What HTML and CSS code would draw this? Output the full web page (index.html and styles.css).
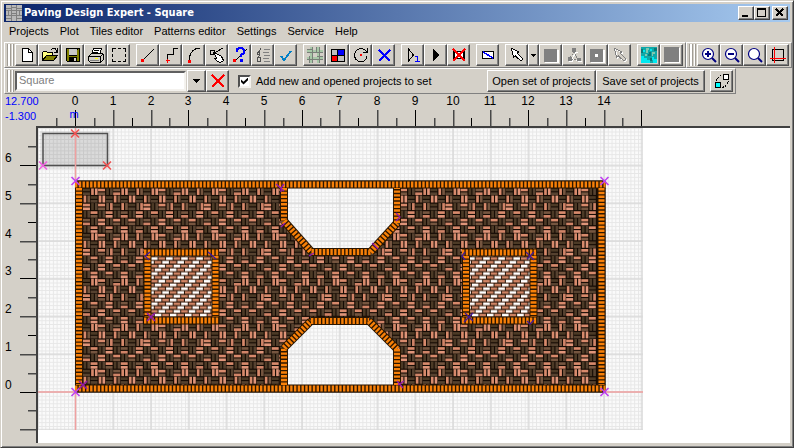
FILE: index.html
```html
<!DOCTYPE html>
<html lang="en">
<head>
<meta charset="utf-8">
<title>Paving Design Expert - Square</title>
<link rel="stylesheet" href="styles.css">
</head>
<body>
<div class="window">
  <header class="titlebar">
    <svg class="logo" viewBox="0 0 16 16"><path fill="#b8b8b8" d="M0 0h16v16H0z"/><path stroke="#808080" fill="none" d="M0 3.500h5M11 3.500h5M5 2.500h6M0 5.500h16M0 10.500h16M5.500 0v16M10.500 0v16M2.500 5v6M13.500 5v6M0 13.500h5M11 13.500h5M5 8.500h6"/></svg>
    <h1>Paving Design Expert - Square</h1>
    <div class="caption-buttons">
      <button class="cap" aria-label="Minimize"><svg viewBox="0 0 12 10"><path d="M2 7h6v2H2z"/></svg></button>
      <button class="cap" aria-label="Maximize"><svg viewBox="0 0 12 10"><path fill-rule="evenodd" d="M1 0h9v9H1zM2 2v6h7V2z"/></svg></button>
      <button class="cap close" aria-label="Close"><svg viewBox="0 0 12 10"><path stroke="#000" stroke-width="1.600" d="M2 1l7 7M9 1L2 8"/></svg></button>
    </div>
  </header>

  <nav class="menu">
    <a href="#">Projects</a><a href="#">Plot</a><a href="#">Tiles editor</a><a href="#">Patterns editor</a><a href="#">Settings</a><a href="#">Service</a><a href="#">Help</a>
  </nav>

  <div class="bands">
    <div class="band grow">
      <span class="grip"></span>
      <div class="group">
        <button class="tool" aria-label="New"><svg viewBox="0 0 16 16"><path fill="#fff" stroke="#000" d="M3.500 1.500h6l4 4v9h-10z"/><path fill="none" stroke="#000" d="M9.500 1.500v4h4"/></svg></button>
        <button class="tool" aria-label="Open"><svg viewBox="0 0 16 16"><path fill="#ffff80" stroke="#000" d="M.500 13.500v-8l1-1h3l1 1h5v3h-6z"/><path fill="#808000" stroke="#000" d="M.500 13.500l4-5h11l-4 5z"/><path fill="none" stroke="#000" d="M9 2.500l2-1h2l2 3M15.500 1v4h-4"/></svg></button>
        <button class="tool" aria-label="Save"><svg viewBox="0 0 16 16"><path fill="#808000" stroke="#000" d="M1.500 1.500h13v13h-12l-1-1z"/><path fill="#c8c8c8" d="M4 2h8v6H4z"/><path d="M4 8h8v1H4zM4 10h8v5H4zM12 2h1v1h-1z"/><path fill="#d4d0c8" d="M9 11h2v3H9z"/></svg></button>
        <button class="tool" aria-label="Print"><svg viewBox="0 0 16 16"><path fill="#fff" stroke="#000" d="M5.500 1.500h8l-2 6h-8z"/><path stroke="#000" d="M6 3.500h5M5 5.500h5"/><path fill="#d4d0c8" stroke="#000" d="M.500 9.500l3-3h11l1 2v4l-3 3h-10l-2-2z"/><path stroke="#000" fill="none" d="M.500 9.500h12v5M12 9.500l3-2"/><path fill="#ff0" d="M7 11h3v1H7z"/><path stroke="#808080" d="M2 13.500h9"/></svg></button>
        <button class="tool" aria-label="Select area"><svg viewBox="0 0 16 16"><path fill="none" stroke="#000" d="M1.500 5V1.500H5M7 1.500h3M12 1.500h2.500V5M14.500 7v3M14.500 12v2.500H12M10 14.500H7M5 14.500H1.500V12M1.500 10V7"/></svg></button>
      </div>
      <div class="group">
        <button class="tool" aria-label="Line"><svg viewBox="0 0 16 16"><path stroke="#000" d="M3 13L14 2"/><path fill="#f00" d="M1 12h3v3H1z"/></svg></button>
        <button class="tool" aria-label="Polyline"><svg viewBox="0 0 16 16"><path fill="none" stroke="#000" d="M4.500 14V7.500h6v-6H15"/><path stroke="#f00" d="M3 13.500h4M4.500 12v4"/></svg></button>
        <button class="tool" aria-label="Arc"><svg viewBox="0 0 16 16"><path fill="none" stroke="#000" d="M3.500 13v-3l1-3 2-3 3-2 4-1"/><path fill="#f00" d="M2 13h3v3H2z"/></svg></button>
        <button class="tool" aria-label="Edit node"><svg viewBox="0 0 16 16"><path fill="none" stroke="#000" d="M1.500 3.500h4v4h-4zM6 5.500L14 1"/><path fill="#fff" stroke="#000" d="M4.500 5.500l3 1 5 3 2 4-3 2-3-1-3-3 2-.500z"/></svg></button>
        <button class="tool" aria-label="Point info"><svg viewBox="0 0 16 16"><path stroke="#000" d="M3 14L15 2"/><path fill="none" stroke="#00f" stroke-width="2.400" d="M5 5V2.500L7 1h3l2 2v3L9 8v2"/><path fill="#00f" d="M8 12h3v3H8z"/><path fill="#f00" d="M1 12h3v3H1z"/></svg></button>
        <button class="tool" aria-label="Properties list"><svg viewBox="0 0 16 16"><path fill="none" stroke="#505050" d="M3.500 5.500L6 1M2.500 5v2h2V5zM2.500 10.500v4h3v-4zM3 10l2-2"/><path stroke="#808080" d="M9 2.500h6M8 5.500h6M9 8.500h6M8 11.500h6M9 14.500h6"/></svg></button>
        <button class="tool" aria-label="Apply"><svg viewBox="0 0 16 16"><path fill="none" stroke="#0080c8" stroke-width="1.800" d="M3 9l3 4 7-9"/></svg></button>
      </div>
      <div class="group">
        <button class="tool" aria-label="Paving pattern"><svg viewBox="0 0 16 16"><path stroke="#a8c8a8" stroke-width="2" d="M0 4h16M0 11h16M4 0v16M11 0v16"/><path stroke="#788078" d="M0 5.500h16M0 12.500h16M5.500 0v16M12.500 0v16M0 2.500h5M10 9.500h6M2.500 9v7M9.500 0v5"/></svg></button>
        <button class="tool" aria-label="Tile colors"><svg viewBox="0 0 16 16"><path d="M1 2h14v13H1z"/><path fill="#c0c0c0" d="M2 3h5v5H2zM8 9h6v5H8z"/><path fill="#00f" d="M8 3h6v5H8z"/><path fill="#f00" d="M2 9h5v5H2z"/></svg></button>
        <button class="tool" aria-label="Rotate"><svg viewBox="0 0 16 16"><path fill="none" stroke="#000" d="M14 9.500l-1 3-3 2H6l-3-2-1.500-3v-3l2-3 3-2h3l3 2 2 2M14.500 1v4.500H10"/><path fill="#f00" d="M7 7h2v2H7z"/></svg></button>
        <button class="tool" aria-label="Delete"><svg viewBox="0 0 16 16"><path stroke="#00f" stroke-width="2.400" d="M3 3l11 11M14 3L3 14"/></svg></button>
      </div>
      <div class="group">
        <button class="tool" aria-label="Step"><svg viewBox="0 0 16 16"><path fill="none" stroke="#000" d="M3.500 2v12l5-6z"/><path fill="none" stroke="#00f" d="M10 9.500h2.500v5M10 14.500h5"/></svg></button>
        <button class="tool" aria-label="Run"><svg viewBox="0 0 16 16"><path d="M5 2l7 6-7 6z"/></svg></button>
        <button class="tool" aria-label="Clear"><svg viewBox="0 0 16 16"><path fill="#fff" stroke="#000" stroke-width="1.500" d="M3 4.500h10v7H3z"/><path stroke="#f00" stroke-width="1.500" d="M2 2l12 12M14 2L2 14"/></svg></button>
      </div>
      <div class="group">
        <button class="tool" aria-label="Cut line"><svg viewBox="0 0 16 16"><path fill="#fff" stroke="#000" d="M2.500 4.500h11v7h-11z"/><path stroke="#00f" stroke-width="1.400" d="M3 5l10 6"/></svg></button>
      </div>
      <div class="group">
        <button class="tool" aria-label="Pointer"><svg viewBox="0 0 16 16"><path fill="#fff" stroke="#000" d="M2.500 1.500l7 3-1 2 5.500 5.500-2 2L6.500 9l-2 1z"/></svg></button><button class="tool drop" aria-label="Pointer options"><svg viewBox="0 0 7 16"><path d="M1 7h5v1H1zM2 8h3v1H2zM3 9h1v1H3z"/></svg></button><button class="tool" aria-label="Fill" disabled><svg viewBox="0 0 16 16"><path fill="#fff" d="M2 3h14v13H2z"/><path fill="#808080" d="M1 2h13v13H1z"/></svg></button>
        <button class="tool" aria-label="Split" disabled><svg viewBox="0 0 16 16"><path stroke="#fff" fill="none" d="M10 5L6 12l8 2M8 5.500h3.500M3 14.500h3.500v-3M12 14.500h3.500"/><path stroke="#808080" stroke-dasharray="2 1" d="M8 4l3 7M4 11l4-6M5 12l7 1"/><path fill="#808080" d="M6 1h4v4H6zM2 10h4v4H2zM11 11h4v3h-4z"/></svg></button>
        <button class="tool" aria-label="Center" disabled><svg viewBox="0 0 16 16"><path fill="#fff" d="M2 3h14v13H2z"/><path fill="#808080" d="M1 2h13v13H1z"/><path fill="#fff" d="M6 7h3v3H6z"/></svg></button>
        <button class="tool" aria-label="Pick" disabled><svg viewBox="0 0 16 16"><path fill="none" stroke="#fff" d="M3.500 2.500l7 3-1 2 5.500 5.500-2 2L7.500 10l-2 1z"/><path fill="none" stroke="#808080" d="M2.500 1.500l7 3-1 2 5.500 5.500-2 2L6.500 9l-2 1z"/></svg></button>
      </div>
      <div class="group">
        <button class="tool" aria-label="Texture"><svg viewBox="0 0 16 16"><path fill="#10a8a8" d="M0 0h16v16H0z"/><path fill="#00e8f0" d="M0 9h3v2h3v2h3v3H0zM11 10h2v2h3v4h-4zM2 3h2v2H2zM9 2h2v2H9z"/><path fill="#80c8b0" d="M5 1h3v2H7v3H5zM11 5h3v2h-2v2h-1zM4 7h2v2H4z"/><path fill="#087878" d="M0 2h2v4H0zM8 5h2v4H7V7h1zM13 1h3v3h-3zM9 11h2v3H9z"/></svg></button>
        <button class="tool" aria-label="Solid" disabled><svg viewBox="0 0 16 16"><path fill="#fff" d="M1 1h15v15H1z"/><path fill="#808080" d="M0 0h15v15H0z"/></svg></button>
      </div>
    </div>
    <div class="band">
      <span class="grip"></span>
      <div class="group">
        <button class="tool lens" aria-label="Zoom in"><svg viewBox="0 0 16 16"><circle cx="7" cy="7" r="5.500" fill="#fff" stroke="#000080" stroke-width="1.200"/><path stroke="#000080" stroke-width="2" d="M4 7h6M7 4v6M11 11l4 4"/></svg></button>
        <button class="tool lens" aria-label="Zoom out"><svg viewBox="0 0 16 16"><circle cx="7" cy="7" r="5.500" fill="#fff" stroke="#000080" stroke-width="1.200"/><path stroke="#000080" stroke-width="2" d="M4 7h6M11 11l4 4"/></svg></button>
        <button class="tool lens" aria-label="Zoom window"><svg viewBox="0 0 16 16"><circle cx="7" cy="7" r="5.500" fill="#fff" stroke="#000080" stroke-width="1.200"/><path stroke="#000080" stroke-width="2" d="M11 11l4 4"/></svg></button>
        <button class="tool" aria-label="Fit plot"><svg viewBox="0 0 16 16"><path fill="none" stroke="#000" d="M2.500 2.500h11v11h-11z"/><path stroke="#f00" d="M0 11.500h16M4.500 0v16"/></svg></button>
      </div>
    </div>
  </div>

  <div class="bands">
    <div class="band">
      <span class="grip"></span>
      <input class="field" type="text" value="Square" aria-label="Project">
      <button class="tool arrow" aria-label="Show projects"><svg viewBox="0 0 7 4"><path d="M0 0h7v1H0zM1 1h5v1H1zM2 2h3v1H2zM3 3h1v1H3z"/></svg></button>
      <button class="tool" aria-label="Remove project"><svg viewBox="0 0 16 16"><path stroke="#f00" stroke-width="1.500" d="M2 2l12 12M14 2L2 14"/></svg></button>
      <label class="check"><input type="checkbox" checked>Add new and opened projects to set</label>
      <button class="tool text">Open set of projects</button>
      <button class="tool text">Save set of projects</button>
      <button class="tool swap" aria-label="Swap"><svg viewBox="0 0 16 16"><path fill="none" stroke="#000" stroke-dasharray="2 1" d="M2.500 8V6l5-4M8 14.500l3-1 3-4V8"/><path fill="#fff" stroke="#000" d="M9.500 1.500h5v5h-5z"/><path fill="#0ff" stroke="#000" d="M1.500 9.500h5v5h-5z"/></svg></button>
    </div>
  </div>

  <main class="work">
    <div class="ruler-top">
      <div class="coords"><span>12.700</span><span>-1.300</span></div>
      <svg id="rulerX" width="752" height="32" viewBox="38 94 752 32"></svg>
    </div>
    <div class="ruler-left"><svg id="rulerY" width="32" height="317" viewBox="4 126 32 317"></svg></div>
    <div class="canvas">
      <svg id="plan" width="752" height="315" viewBox="38 128 752 315">
        <defs>
          <pattern id="fine" patternUnits="userSpaceOnUse" x="75.500" y="392" width="3.775" height="3.775"><path stroke="#e7e7e7" d="M0 0h4M0 0v4" stroke-width="2"/></pattern>
          <pattern id="coarse" patternUnits="userSpaceOnUse" x="74.500" y="391" width="37.750" height="37.750"><path stroke="#dadada" d="M0 1h38M1 0v38" stroke-width="1.500"/></pattern>
          <pattern id="bond" patternUnits="userSpaceOnUse" x="151" y="256.500" width="15.100" height="15.100">
            <path fill="#241408" d="M0 0h16v16H0z"/>
            <path stroke="#d08464" stroke-width="2.600" stroke-dasharray="6.500 1.050" d="M0 1.900h16M-3.775 5.675h20M-7.550 9.450h23M-11.325 13.225h27"/>
            <path stroke="#fff" stroke-width="2.600" stroke-dasharray="6.500 8.600" d="M0 1.900h16M-3.775 5.675h20M-7.550 9.450h23M-11.325 13.225h27"/>
          </pattern>
          <g id="cross"><path d="M-4-4L4 4M4-4L-4 4" stroke-width="1.600"/></g>
          <path id="hexTop" d="M284 188V221L311.500 252H370.500L397 223V188"/>
          <path id="hexBottom" d="M284 385V348L311 321H369L397 349V385"/>
        </defs>
        <path fill="#fafafa" d="M38 128h605v302H38z"/>
        <path fill="url(#fine)" d="M38 128h605v302H38z"/>
        <path fill="url(#coarse)" d="M38 128h605v302H38z"/>
        <path fill="#000" opacity=".07" d="M40 131h70v38H40z"/>
        <path fill="#000" fill-opacity=".06" stroke="#505050" stroke-width="1.500" d="M43 133.500h64.500v32H43z"/>
        <path stroke="#f0a0a0" stroke-width="1.500" d="M75.500 128v53M75.500 392v38M38 392h37M605 392h38"/>
        <path fill="#150b04" d="M75 180.500h530.500v212H75z"/>
        <g id="weave"></g>
        <g fill="#fafafa"><use href="#hexTop"/><use href="#hexBottom"/></g>
        <g fill="url(#fine)"><use href="#hexTop"/><use href="#hexBottom"/></g>
        <g fill="url(#coarse)"><use href="#hexTop"/><use href="#hexBottom"/></g>
        <path fill="url(#bond)" d="M151 256h61v61h-61zM469 256h61v61h-61z"/>
        <g id="edging" fill="none"></g>
        <g stroke="#c040f0"><use href="#cross" x="75.500" y="181"/><use href="#cross" x="604.500" y="181"/><use href="#cross" x="75.500" y="392"/><use href="#cross" x="604.500" y="392"/></g>
        <g stroke="#9018a8"><use href="#cross" x="83" y="385"/><use href="#cross" x="151" y="317"/></g>
        <g stroke="#9018b0" fill="none" stroke-width="1.300"><path d="M276 184l8 7M284 184l-3 4v4M396 213l4 4-4 4M281 227l4-4M309 256l5-3M372 243l6 6M398 385l6-4M397 381l6 7"/></g>
        <g stroke="#401898" fill="none" stroke-width="1.300"><path d="M150 252l-5 4 4 4M208 252l8 7M465 252l-3 4 3 4M526 252l8 8M534 252l-7 7M465 313l8 8M473 313l-9 9M527 321l3 3 4-4"/></g>
        <g stroke="#f05050"><use href="#cross" x="75" y="133.500"/><use href="#cross" x="107" y="165.500"/></g>
        <use href="#cross" x="43" y="165.500" stroke="#f060e0"/>
      </svg>
    </div>
  </main>
</div>
<script src="plan.js"></script>
</body>
</html>
```

FILE: styles.css
```css
* { box-sizing: border-box; }

body {
  margin: 0;
  font: 11px/14px "Liberation Sans", Arial, sans-serif;
  color: #000;
  background: #d4d0c8;
}

.window {
  height: 100vh;
  display: flex;
  flex-direction: column;
  padding: 3px 3px 4px;
  background: #d4d0c8;
  border: 1px solid;
  border-color: #d4d0c8 #404040 #404040 #d4d0c8;
  box-shadow: inset 1px 1px #fff, inset -1px -1px #808080;
  overflow: hidden;
}

svg { display: block; }

/* Title bar */
.titlebar {
  flex: none;
  height: 18px;
  display: flex;
  align-items: center;
  gap: 2px;
  padding: 0 2px;
  background: linear-gradient(to right, #0a246a, #a6caf0);
}

.logo { width: 16px; height: 16px; }

h1 {
  flex: 1;
  margin: 0;
  font: bold 11px/16px "DejaVu Sans Condensed", "DejaVu Sans", sans-serif;
  color: #fff;
}

.caption-buttons { display: flex; }

.cap {
  width: 16px;
  height: 14px;
  padding: 1px;
  background: #d4d0c8;
  border: 1px solid;
  border-color: #fff #404040 #404040 #fff;
  box-shadow: inset -1px -1px #808080;
}

.cap svg { width: 12px; height: 10px; shape-rendering: crispEdges; }
.cap.close { margin-left: 2px; }

/* Menu */
.menu {
  flex: none;
  height: 20px;
  display: flex;
  align-items: center;
  gap: 11px;
  padding: 0 5px 2px;
}

.menu a { color: #000; text-decoration: none; }

/* Toolbars */
.bands { flex: none; display: flex; }

.band {
  height: 26px;
  display: flex;
  align-items: center;
  padding: 0 2px;
  border: 1px solid;
  border-color: #fff #808080 #808080 #fff;
}

.grip {
  width: 7px;
  height: 22px;
  margin-right: 1px;
  border: solid #a09c94;
  border-width: 0 1px;
  background: linear-gradient(to right, #fff 0 2px, #a09c94 2px 3px, #d4d0c8 3px 4px, #fff 4px);
}

.group { display: flex; }
.group + .group { margin-left: 6px; }

.tool {
  width: 23px;
  height: 22px;
  display: flex;
  align-items: center;
  justify-content: center;
  padding: 0;
  font: inherit;
  color: #000;
  background: #d4d0c8;
  border: 1px solid;
  border-color: #fff #505050 #505050 #fff;
  box-shadow: inset -1px -1px #808080;
}

.tool svg { width: 16px; height: 16px; shape-rendering: crispEdges; }
.tool.lens svg { shape-rendering: auto; }
.tool.drop { width: 11px; }
.tool.drop svg { width: 7px; height: 16px; }
.tool.arrow { width: 19px; }
.tool.arrow svg { width: 7px; height: 4px; }
.tool.text { width: 109px; }
.tool.swap { margin-left: 5px; }

.field {
  width: 171px;
  height: 20px;
  margin-right: 1px;
  padding: 0 2px 2px;
  font: inherit;
  color: #808080;
  background: #fff;
  border: 2px solid;
  border-color: #606060 #f4f2ee #f4f2ee #606060;
}

.check {
  display: flex;
  align-items: center;
  gap: 5px;
  width: 258px;
  padding-left: 9px;
}

.check input {
  appearance: none;
  position: relative;
  width: 13px;
  height: 13px;
  margin: 0;
  border: 2px solid;
  border-color: #505050 #f4f2ee #f4f2ee #505050;
  background: #fff;
}

.check input:checked::after {
  content: "";
  position: absolute;
  left: 1px;
  top: 1px;
  width: 7px;
  height: 7px;
  background: #000;
  clip-path: polygon(0 28%, 36% 62%, 100% 0, 100% 38%, 36% 100%, 0 66%);
}

/* Drawing area */
.work {
  flex: 1;
  min-height: 0;
  display: grid;
  grid-template: 32px 1fr / 32px 1fr;
}

.ruler-top {
  grid-column: 1 / 3;
  display: flex;
  overflow: hidden;
}

.coords {
  flex: none;
  width: 34px;
  display: flex;
  flex-direction: column;
  gap: 1px;
  padding-left: 1px;
  color: #00f;
}

.ruler-left { overflow: hidden; }

.ruler-top svg, .ruler-left svg { flex: none; overflow: visible; }

.ruler-top text { font-size: 12px; text-anchor: middle; }
.ruler-left text { font-size: 12px; }
.ruler-top .unit { fill: #00f; font-size: 11px; }

.canvas {
  overflow: hidden;
  background: #fff;
  border: solid #404040;
  border-width: 2px 0 0 2px;
}
```

FILE: plan.js
```js
const NS = "http://www.w3.org/2000/svg";
const UNIT = 37.75;
const ORIGIN = { x: 75.5, y: 392 };

function add(parent, name, attrs, text) {
  const el = document.createElementNS(NS, name);
  for (const key in attrs) el.setAttribute(key, attrs[key]);
  if (text !== undefined) el.textContent = text;
  parent.appendChild(el);
  return el;
}

// Rulers: a long tick on each metre, a short one on each half
function drawRulers() {
  const rx = document.getElementById("rulerX");
  for (let i = -1; i <= 30; i++) {
    const x = Math.floor(ORIGIN.x + (i * UNIT) / 2);
    const whole = i % 2 === 0;
    add(rx, "rect", { x, y: whole ? 110 : 118, width: i % 3 ? 1.5 : 1, height: whole ? 16 : 8, fill: i % 3 ? "#484848" : "#000" });
    if (whole && i < 30) add(rx, "text", { x: x, y: 105 }, i / 2);
  }
  add(rx, "text", { x: 74, y: 118, class: "unit" }, "m");

  const ry = document.getElementById("rulerY");
  for (let i = -2; i <= 13; i++) {
    const y = Math.floor(ORIGIN.y - (i * UNIT) / 2);
    const whole = i % 2 === 0;
    add(ry, "rect", { x: whole ? 20 : 28, y, width: whole ? 16 : 8, height: i % 3 ? 1.5 : 1, fill: i % 3 ? "#484848" : "#000" });
    if (whole && i >= 0) add(ry, "text", { x: 5, y: y - 3 }, i / 2);
  }
}

// Basket weave: blocks of two bricks, turned in alternate cells.
// Each block has one letter for its pair of colours; the table repeats.
const PAIRS = {
  s: ["#d88a6c", "#e0957a"],
  m: ["#d88a6c", "#765640"],
  b: ["#765640", "#d08468"],
  d: ["#4c3a26", "#564230"]
};
const WEAVE = [
  "dsmdbsdm",
  "mdsdmdsd",
  "sdmbdmdb",
  "dmdsdbds",
  "bdsdmdmd",
  "dsdmdsdb"
];

function drawWeave() {
  const g = document.getElementById("weave");
  const size = UNIT / 5;
  for (let row = 0; row < 27; row++) {
    for (let col = 0; col < 68; col++) {
      const x = 83 + col * size;
      const y = 188 + row * size;
      const flat = (row + col) % 2 === 0;
      const pair = PAIRS[WEAVE[row % 6][col % 8]];
      for (let k = 0; k < 2; k++) {
        add(g, "rect", {
          x: x + (flat ? 0 : k * size / 2 + 0.6),
          y: y + (flat ? k * size / 2 + 0.6 : 0),
          width: flat ? size - 0.6 : size / 2 - 1.1,
          height: flat ? size / 2 - 1.1 : size - 0.6,
          fill: pair[k]
        });
      }
    }
  }
}

// Edging: a row of bricks laid across each run
function drawEdging() {
  const g = document.getElementById("edging");
  const runs = [
    "M75 184.500H605.500", "M75 388.500H605.500", "M79 188V385", "M601.500 188V385",
    "M284 188V221", "M284 221L311.500 252", "M311.500 252H370.500", "M370.500 252L397 223", "M397 223V188",
    "M284 385V348", "M284 348L311 321", "M311 321H369", "M369 321L397 349", "M397 349V385",
    "M144 252.500H219", "M144 320.500H219", "M147.500 256V317", "M215.500 256V317",
    "M462 252.500H537", "M462 320.500H537", "M466 256V317", "M533.500 256V317"
  ];
  for (const d of runs) {
    add(g, "path", { d, stroke: "#2c1600", "stroke-width": 8 });
    add(g, "path", { d, stroke: "#f88008", "stroke-width": 6, "stroke-dasharray": "2.4 1.375" });
  }
}

drawRulers();
drawWeave();
drawEdging();
```
